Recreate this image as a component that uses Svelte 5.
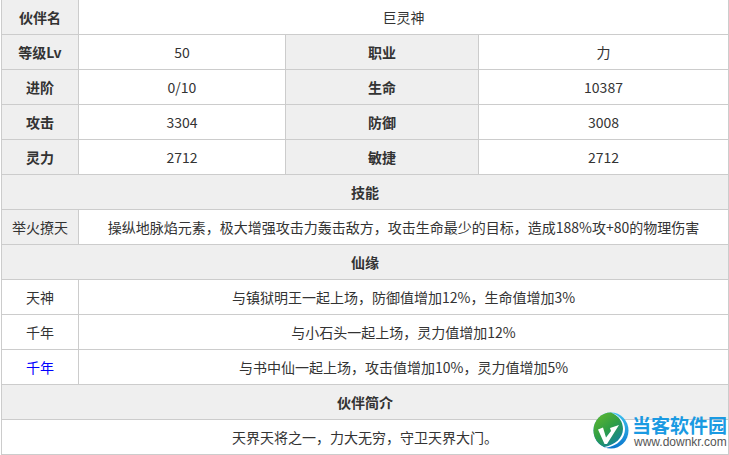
<script>
  const stats = [
    ['等级Lv', '50', '职业', '力'],
    ['进阶', '0/10', '生命', '10387'],
    ['攻击', '3304', '防御', '3008'],
    ['灵力', '2712', '敏捷', '2712']
  ];
  const bonds = [
    { name: '天神', text: '与镇狱明王一起上场，防御值增加12%，生命值增加3%' },
    { name: '千年', text: '与小石头一起上场，灵力值增加12%' },
    { name: '千年', text: '与书中仙一起上场，攻击值增加10%，灵力值增加5%', link: true }
  ];
</script>

<main class="page">
  <table class="info">
    <colgroup>
      <col class="c1" />
      <col class="c2" />
      <col class="c3" />
      <col class="c4" />
    </colgroup>
    <tbody>
      <tr>
        <th>伙伴名</th>
        <td colspan="3">巨灵神</td>
      </tr>
      {#each stats as row}
        <tr>
          <th>{row[0]}</th>
          <td>{row[1]}</td>
          <th>{row[2]}</th>
          <td>{row[3]}</td>
        </tr>
      {/each}
      <tr><th colspan="4">技能</th></tr>
      <tr>
        <td class="shade">举火撩天</td>
        <td colspan="3">操纵地脉焰元素，极大增强攻击力轰击敌方，攻击生命最少的目标，造成188%攻+80的物理伤害</td>
      </tr>
      <tr><th colspan="4">仙缘</th></tr>
      {#each bonds as bond}
        <tr>
          <td class:link={bond.link}>{bond.name}</td>
          <td colspan="3">{bond.text}</td>
        </tr>
      {/each}
      <tr><th colspan="4">伙伴简介</th></tr>
      <tr><td colspan="4">天界天将之一，力大无穷，守卫天界大门。</td></tr>
    </tbody>
  </table>

  <div class="mark">
    <svg width="36" height="37" viewBox="0 0 36 37" aria-hidden="true">
      <defs>
        <linearGradient id="inner" x1="0.1" y1="0" x2="0.8" y2="1">
          <stop offset="0" stop-color="#62b82e" />
          <stop offset="0.5" stop-color="#2f9e45" />
          <stop offset="1" stop-color="#0e7fa8" />
        </linearGradient>
        <linearGradient id="outer" x1="0.6" y1="0" x2="0.5" y2="1">
          <stop offset="0" stop-color="#3cc0ee" />
          <stop offset="1" stop-color="#0a74cc" />
        </linearGradient>
      </defs>
      <ellipse cx="18" cy="18.500" rx="17.500" ry="18" fill="url(#outer)" />
      <path d="M18 .5C8 .5.5 8.500.5 18.500c0 7 4 13.500 11 16.500C22 33 30 26 30 17 30 10 26 4 18 .5z" fill="url(#inner)" />
      <path d="M18 .5c9 3.500 12 10 12 16.500 0 9-8 16-18.500 18l1.500.8C25 34 32 26 32 17 32 10 27 3.500 18 .5z" fill="#fff" />
      <path d="M5 17.500l5-2 3 10L18 19l-1-3 9-3-12 19h-2.500z" fill="#fff" />
    </svg>
    <div class="brand">
      <span class="cn">当客软件园</span>
      <span class="url">www.downkr.com</span>
    </div>
  </div>
</main>

<style>
  :global(body) {
    margin: 0;
    background: #fff;
  }

  .page {
    position: relative;
    width: 729px;
    height: 455px;
    overflow: hidden;
    font-family: "Noto Sans CJK SC", "Open Sans", sans-serif;
  }

  .info {
    width: 728px;
    margin: -1px 0 0 1px;
    border-collapse: collapse;
    table-layout: fixed;
    font-size: 14px;
    line-height: 20px;
    color: #333;
  }

  .c1 { width: 77px; }
  .c2 { width: 207px; }
  .c3 { width: 193px; }
  .c4 { width: 250px; }

  th,
  td {
    height: 35px;
    padding: 0 0 1px;
    box-sizing: border-box;
    border: 1px solid #ccc;
    text-align: center;
    vertical-align: middle;
    font-weight: 400;
  }

  th {
    background: #efefef;
    font-weight: 700;
  }

  .shade {
    background: #efefef;
  }

  .link {
    color: #00f;
  }

  .mark {
    position: absolute;
    left: 593px;
    top: 412px;
    display: flex;
    gap: 3px;
  }

  .brand {
    display: flex;
    flex-direction: column;
    padding-top: 2px;
  }

  .cn {
    font-size: 19px;
    line-height: 22px;
    font-weight: 700;
    color: #1a9ae2;
    white-space: nowrap;
  }

  .url {
    margin-left: 2px;
    font-family: "Liberation Sans", sans-serif;
    font-size: 12px;
    line-height: 12px;
    color: #555;
    white-space: nowrap;
  }
</style>
